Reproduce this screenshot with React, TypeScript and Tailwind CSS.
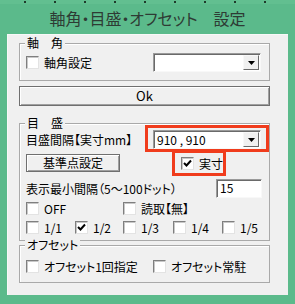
import React from 'react';

function Check({ checked = false }: { checked?: boolean }) {
	return (
		<span className="w-[13px] h-[13px] shrink-0 bg-white border border-[#7f7f7f] border-b-[#e3e3e3] border-r-[#e3e3e3] shadow-[inset_1px_1px_0_#c8c8c8] flex items-center justify-center">
			{checked && (
				<svg width="9" height="9" viewBox="0 0 9 9">
					<path d="M1 4 L3.5 6.5 L8 1.5" fill="none" stroke="#000" strokeWidth="2" />
				</svg>
			)}
		</span>
	);
}

function CheckLabel({ label, checked = false, className = '' }: { label: string; checked?: boolean; className?: string }) {
	return (
		<div className={`flex items-center gap-[5px] h-[13px] ${className}`}>
			<Check checked={checked} />
			<span className="leading-[13px] whitespace-nowrap">{label}</span>
		</div>
	);
}

function Combo({ value = '' }: { value?: string }) {
	return (
		<div className="w-[108px] h-[19px] bg-white border border-[#9a9a9a] border-b-[#f8f8f8] border-r-[#f8f8f8] shadow-[inset_1px_1px_0_#6a6a6a] flex items-center justify-between pl-[3px] pr-[1px]">
			<span className="leading-[15px]">{value}</span>
			<div className="w-[16px] h-[15px] bg-[#f0f0f0] border border-[#f8f8f8] border-b-[#6a6a6a] border-r-[#6a6a6a] flex items-center justify-center">
				<svg width="7" height="4" viewBox="0 0 7 4">
					<path d="M0 0 H7 L3.5 4 Z" fill="#000" />
				</svg>
			</div>
		</div>
	);
}

function Group({ title, className = '', children }: { title: string; className?: string; children: React.ReactNode }) {
	return (
		<div className={`relative ml-[11px] w-[251px] border border-[#a9a9a9] shadow-[inset_1px_1px_0_#fff] ${className}`}>
			<span className="absolute left-[5px] -top-[8px] px-[2px] bg-[#f0f0f0] leading-[14px] whitespace-pre">{title}</span>
			{children}
		</div>
	);
}

export default function App() {
	const dots = [25, 55, 85, 115, 145, 177, 208, 238, 270];
	return (
		<div className="w-[295px] h-[304px] bg-[#5bba8b] flex flex-col overflow-hidden font-['Noto_Sans_CJK_JP',sans-serif] [font-feature-settings:'palt'] text-[12px] text-black">
			<div className="h-[4px] flex items-start bg-[#62bf90]">
				{dots.map((x, i) => (
					<span key={x} className={`w-[2px] h-[2px] mt-[1px] bg-[#1f3a2c] ${i === 0 ? 'ml-[24px]' : 'ml-[28px]'}`} />
				))}
			</div>
			<div className="h-[30px] flex items-center justify-center text-[16px] text-[#2e3b34] pb-[2px]">
				軸角・目盛・オフセット　設定
			</div>
			<div className="relative mx-[7px] h-[261px] bg-[#f0f0f0] border-l border-t border-[#f8f8f8] flex flex-col">
				<Group title="軸　角" className="mt-[8px] h-[38px]">
					<div className="flex items-center mt-[9px] pl-[6px]">
						<CheckLabel label="軸角設定" />
						<div className="ml-auto mr-[8px]">
							<Combo />
						</div>
					</div>
				</Group>

				<button className="mt-[5px] ml-[11px] w-[251px] h-[20px] bg-[#f0f0f0] border border-[#6f6f6f] shadow-[inset_1px_1px_0_#fff,inset_-1px_-1px_0_#a0a0a0] leading-[16px] text-[13px]">
					Ok
				</button>

				<Group title="目　盛" className="mt-[17px] h-[118px]">
					<div className="flex items-center mt-[6px] pl-[6px]">
						<span className="whitespace-nowrap">目盛間隔【実寸mm】</span>
						<div className="ml-auto mr-[8px]">
							<Combo value="910 , 910" />
						</div>
					</div>
					<div className="flex items-center mt-[5px] pl-[6px]">
						<button className="w-[94px] h-[18px] bg-[#f0f0f0] border border-[#6f6f6f] shadow-[inset_1px_1px_0_#fff,inset_-1px_-1px_0_#a0a0a0] leading-[14px]">
							基準点設定
						</button>
						<CheckLabel label="実寸" checked className="ml-[61px]" />
					</div>
					<div className="flex items-center mt-[7px] pl-[6px]">
						<span className="whitespace-nowrap">表示最小間隔（5～100ドット）</span>
						<div className="ml-auto mr-[7px] w-[46px] h-[19px] bg-white border border-[#9a9a9a] border-b-[#f8f8f8] border-r-[#f8f8f8] shadow-[inset_1px_1px_0_#6a6a6a] pl-[3px] leading-[16px]">
							15
						</div>
					</div>
					<div className="flex items-center mt-[4px] pl-[6px]">
						<CheckLabel label="OFF" className="w-[97px]" />
						<CheckLabel label="読取【無】" />
					</div>
					<div className="flex items-center mt-[6px] pl-[6px]">
						<CheckLabel label="1/1" className="w-[49px]" />
						<CheckLabel label="1/2" checked className="w-[48px]" />
						<CheckLabel label="1/3" className="w-[50px]" />
						<CheckLabel label="1/4" className="w-[49px]" />
						<CheckLabel label="1/5" />
					</div>
				</Group>

				<Group title="オフセット" className="mt-[4px] h-[38px]">
					<div className="flex items-center mt-[14px] pl-[6px]">
						<CheckLabel label="オフセット1回指定" className="w-[127px]" />
						<CheckLabel label="オフセット常駐" />
					</div>
				</Group>

				<div className="absolute left-[137px] top-[90px] w-[124px] h-[27px] border-[3px] border-[#f03c1c]" />
				<div className="absolute left-[164px] top-[115px] w-[54px] h-[26px] border-[3px] border-[#f03c1c]" />
			</div>
		</div>
	);
}
